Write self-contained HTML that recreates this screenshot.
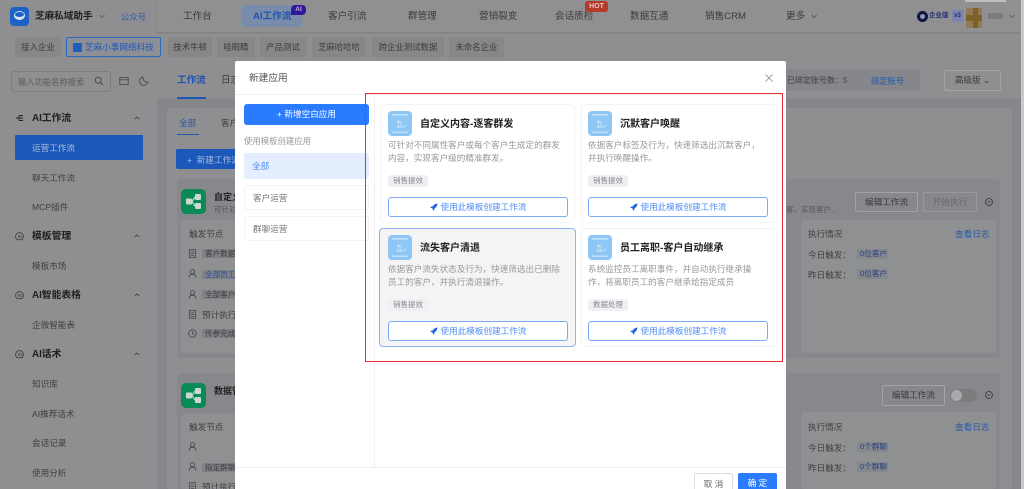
<!DOCTYPE html>
<html lang="zh-CN">
<head>
<meta charset="utf-8">
<title>新建应用</title>
<style>
*{box-sizing:border-box;margin:0;padding:0}
html,body{width:1024px;height:489px;overflow:hidden;background:#8f8f91}
body{font-family:"Liberation Sans","Noto Sans CJK SC",sans-serif;color:#3c3c3c}
#w{position:absolute;left:0;top:0;width:1024px;height:489px;overflow:hidden;filter:blur(.35px)}
.a{position:absolute}
.t{position:absolute;white-space:nowrap;line-height:14px;font-size:8.6px;margin-top:1px}
.n{font-size:9.6px;color:#3b3b3d}
.s{color:#3f3f41}
.h{font-size:9.8px;font-weight:700;color:#202022}
.tag{position:absolute;background:#878789;border-radius:2px;height:20px;top:37px;font-size:8.4px;line-height:20px;text-align:center;color:#3d3d3f;white-space:nowrap}
.mini{position:absolute;height:9px;background:#7f8184;border-radius:1px;font-size:7.6px;line-height:9px;color:#3c3c3e;padding:0 3px;white-space:nowrap;overflow:hidden}
.m2{height:10px;line-height:10px;color:#273f7f;background:#84878d;width:31px}
.btn{position:absolute;border:1px solid #a3a4a6;border-radius:2px;text-align:center;font-size:8.6px;line-height:18px;color:#3a3a3c;white-space:nowrap}
.card{position:absolute;width:196px;height:119px;background:#fff;border:1px solid #f3f4f6;border-radius:4px;--l:6px}
.card.on{background:#f4f4f5;border-color:#8cb3f2;left:379px;--l:8px}
.card .ic{position:absolute;left:var(--l);top:6px;width:24px;height:25px}
.card .ti{position:absolute;left:calc(var(--l) + 32px);top:13px;font-size:10px;line-height:14px;font-weight:700;color:#222;white-space:nowrap}
.card .de{position:absolute;left:var(--l);top:34px;width:180px;font-size:8.6px;line-height:13.2px;color:#999}
.card .tg{position:absolute;left:var(--l);top:70px;width:40px;height:12px;background:#eef0f4;border-radius:3px;font-size:7.5px;line-height:12px;text-align:center;color:#8a8a8e}
.card .bt{position:absolute;left:var(--l);top:92px;width:180px;height:20px;background:#fff;border:1px solid #7ea9f5;border-radius:3px;font-size:8.6px;line-height:18px;color:#4f8cf7;text-align:center;white-space:nowrap}
.card .bt svg{width:8px;height:8px;vertical-align:-1px;margin-right:3px}
.side{position:absolute;left:244px;width:125px;height:25px;border:1px solid #f3f3f3;border-radius:3px;font-size:8.6px;line-height:24px;padding-left:8px;color:#777}
</style>
</head>
<body>
<svg width="0" height="0" style="position:absolute">
<defs>
<symbol id="tpl" viewBox="0 0 24 25">
<rect width="24" height="25" rx="4" fill="#8ec7f6"/>
<rect x="4" y="3" width="16" height="1.6" fill="#c4e2fa"/>
<rect x="4" y="20.5" width="16" height="1.4" fill="#c4e2fa"/>
<path d="M10.500 16V9.500M10.500 9.500l-1.600 1.800M10.500 9.500l1.600 1.800M13 10v6M8 16h8l1.500-2" fill="none" stroke="#c9e5fb" stroke-width=".9"/>
</symbol>
<symbol id="rk" viewBox="0 0 16 16">
<path d="M15 1C10.500 1.200 7.500 3.500 5.300 7L2 7.500 0.500 10l3.300.3 2 2 .3 3.200 2.500-1.500.5-3.300C12.500 8.500 14.800 5.500 15 1z" fill="#1f66e5"/>
</symbol>
<symbol id="gr" viewBox="0 0 25 25">
<rect width="25" height="25" rx="5" fill="#0a8a57"/>
<rect x="5" y="9.500" width="6" height="6" rx="1" fill="#c9d8d0"/>
<rect x="14" y="5" width="6" height="6" rx="1" fill="#c9d8d0"/>
<rect x="14" y="14" width="6" height="6" rx="1" fill="#c9d8d0"/>
<path d="M11 12.500L14 8M11 12.500L14 17" stroke="#c9d8d0" stroke-width="1.200"/>
</symbol>
<symbol id="ai" viewBox="0 0 10 10">
<path d="M5 .7a4.300 4.300 0 0 1 4.300 4.300c0 1.500-.7 2.800-1.800 3.600H2.500A4.300 4.300 0 0 1 .7 5 4.300 4.300 0 0 1 5 .7z" fill="none" stroke="#333" stroke-width=".8"/>
<path d="M3.400 6.500L4.600 3.500 5.800 6.500M6.900 3.500v3" fill="none" stroke="#333" stroke-width=".6"/>
</symbol>
<symbol id="us" viewBox="0 0 10 10">
<circle cx="5" cy="3" r="2.300" fill="none" stroke="#3d3d3f" stroke-width=".9"/>
<path d="M1 9.500c.4-2.600 2-3.800 4-3.800s3.600 1.200 4 3.800" fill="none" stroke="#3d3d3f" stroke-width=".9"/>
</symbol>
<symbol id="dc" viewBox="0 0 10 10">
<rect x="1.500" y=".8" width="7" height="8.400" fill="none" stroke="#3d3d3f" stroke-width=".8"/>
<path d="M3 3.200h4M3 5.200h4M3 7.200h4" stroke="#3d3d3f" stroke-width=".7"/>
</symbol>
<symbol id="ck" viewBox="0 0 10 10">
<circle cx="5" cy="5" r="4.200" fill="none" stroke="#3d3d3f" stroke-width=".8"/>
<path d="M5 2.500V5.300L7 6.500" fill="none" stroke="#3d3d3f" stroke-width=".8"/>
</symbol>
<symbol id="mn" viewBox="0 0 8 8">
<circle cx="4" cy="4" r="3.500" fill="none" stroke="#333" stroke-width=".8"/>
<path d="M2.300 4h3.400" stroke="#333" stroke-width=".8"/>
</symbol>
</defs>
</svg>

<div id="w">
<!-- header -->
<div class="a" style="left:0;top:0;width:157px;height:32px;background:#8f8f91"></div>
<div class="a" style="left:157px;top:0;width:867px;height:32px;background:#909092;box-shadow:0 1px 2px rgba(0,0,0,.12)"></div>
<div class="a" style="left:10px;top:7px;width:19px;height:19px;border-radius:4px;background:#1c62c8"></div>
<div class="a" style="left:14px;top:11px;width:11px;height:9px;border-radius:50%;background:#dfe6f0"></div>
<div class="a" style="left:15px;top:12px;width:9px;height:5px;border-radius:50%;background:#1c62c8"></div>
<div class="t" style="left:35px;top:9px;font-size:9.600px;font-weight:700;color:#1f1f21">芝麻私域助手</div>
<svg class="a" style="left:99px;top:14px" width="6" height="5" viewBox="0 0 6 5"><path d="M.5 1L3 3.500 5.500 1" fill="none" stroke="#555" stroke-width=".7"/></svg>
<div class="t" style="left:121px;top:9px;font-size:8.400px;color:#2d5ba8">公众号</div>

<div class="t n" style="left:183px;top:9px">工作台</div>
<div class="a" style="left:242px;top:5px;width:60px;height:22px;background:#7a8cab;border-radius:2px"></div>
<div class="t n" style="left:253px;top:9px;color:#1f56b0;font-weight:700">AI工作流</div>
<div class="a" style="left:291px;top:5px;width:15px;height:10px;background:#32189a;border-radius:4px 4px 4px 0;color:#b9b3dc;font-size:6.500px;line-height:10px;text-align:center;font-weight:700">AI</div>
<div class="t n" style="left:328px;top:9px">客户引流</div>
<div class="t n" style="left:408px;top:9px">群管理</div>
<div class="t n" style="left:479px;top:9px">营销裂变</div>
<div class="t n" style="left:555px;top:9px">会话质检</div>
<div class="a" style="left:585px;top:1px;width:23px;height:11px;background:#b53a2c;border-radius:3px;color:#e5c6c0;font-size:7px;line-height:11px;text-align:center;font-weight:700">HOT</div>
<div class="t n" style="left:630px;top:9px">数据互通</div>
<div class="t n" style="left:705px;top:9px">销售CRM</div>
<div class="t n" style="left:786px;top:9px">更多</div>
<svg class="a" style="left:811px;top:14px" width="6" height="5" viewBox="0 0 6 5"><path d="M.5 1L3 3.500 5.500 1" fill="none" stroke="#444" stroke-width=".7"/></svg>
<div class="a" style="left:917px;top:11px;width:11px;height:11px;border-radius:50%;border:3px solid #14143c;background:#8f9bb5"></div>
<div class="t" style="left:929px;top:8px;font-size:6.500px;font-weight:700;color:#22307a">企业版</div>
<div class="a" style="left:952px;top:10px;width:11px;height:12px;background:#7e83ad;color:#1f2a70;font-size:6px;line-height:12px;text-align:center;font-weight:700">v3</div>
<div class="a" style="left:966px;top:8px;width:16px;height:20px;background:#8f7a55;border-radius:1px"></div>
<div class="a" style="left:973px;top:8px;width:5px;height:20px;background:#7d5f28"></div>
<div class="a" style="left:966px;top:15px;width:16px;height:6px;background:#7d5f28"></div>
<div class="a" style="left:988px;top:13px;width:15px;height:6px;background:#7b7b7d"></div>
<svg class="a" style="left:1009px;top:14px" width="6" height="5" viewBox="0 0 6 5"><path d="M.5 1L3 3.500 5.500 1" fill="none" stroke="#555" stroke-width=".7"/></svg>
<div class="a" style="left:965px;top:0;width:41px;height:2px;background:#bdbdbd"></div>

<!-- company tags -->
<div class="tag" style="left:15px;width:46px">接入企业</div>
<div class="a" style="left:66px;top:37px;width:95px;height:20px;border:1px solid #2f68bf;border-radius:2px;background:#8c8f96"></div>
<div class="a" style="left:73px;top:43px;width:9px;height:9px;background:#1f5ec0;border-radius:1px"></div>
<div class="t" style="left:85px;top:39px;color:#2159b8;font-size:8.600px">芝麻小事网络科技</div>
<div class="tag" style="left:168px;width:44px">技术牛顿</div>
<div class="tag" style="left:217px;width:38px">哇眼睛</div>
<div class="tag" style="left:260px;width:46px">产品测试</div>
<div class="tag" style="left:312px;width:54px">芝麻哈哈哈</div>
<div class="tag" style="left:372px;width:72px">跨企业测试数据</div>
<div class="tag" style="left:449px;width:55px">未命名企业</div>

<!-- search -->
<div class="a" style="left:11px;top:71px;width:100px;height:21px;border:1px solid #7d7e80;border-radius:3px"></div>
<div class="t" style="left:18px;top:74px;color:#5d5d5f;font-size:8.300px">输入功能名称搜索</div>
<svg class="a" style="left:94px;top:76px" width="10" height="10" viewBox="0 0 10 10"><circle cx="4.200" cy="4.200" r="3" fill="none" stroke="#444" stroke-width=".9"/><path d="M6.500 6.500L9 9" stroke="#444" stroke-width=".9"/></svg>
<svg class="a" style="left:119px;top:76px" width="10" height="10" viewBox="0 0 10 10"><rect x=".8" y="1.500" width="8.400" height="7" fill="none" stroke="#444" stroke-width=".8"/><path d="M.8 3.800h8.400" stroke="#444" stroke-width=".8"/></svg>
<svg class="a" style="left:139px;top:76px" width="10" height="10" viewBox="0 0 10 10"><path d="M4 .8a4.300 4.300 0 1 0 5 5.400A4.500 4.500 0 0 1 4 .8z" fill="none" stroke="#444" stroke-width=".8"/></svg>

<!-- sidebar -->
<svg class="a" style="left:16px;top:114px" width="8" height="8" viewBox="0 0 8 8"><path d="M0 4h3M3 1.500h4M3 4h4M3 6.500h4M3 1.500v5" stroke="#222" stroke-width=".9" fill="none"/></svg>
<div class="t h" style="left:32px;top:111px">AI工作流</div>
<div class="a" style="left:15px;top:135px;width:128px;height:25px;background:#1b58ba;border-radius:1px"></div>
<div class="t" style="left:32px;top:140px;color:#a9bcdc">运营工作流</div>
<div class="t s" style="left:32px;top:170px">聊天工作流</div>
<div class="t s" style="left:32px;top:199px">MCP插件</div>
<svg class="a" style="left:15px;top:232px" width="9" height="9"><use href="#ai"/></svg>
<div class="t h" style="left:32px;top:229px">模板管理</div>
<div class="t s" style="left:32px;top:258px">模板市场</div>
<svg class="a" style="left:15px;top:291px" width="9" height="9"><use href="#ai"/></svg>
<div class="t h" style="left:32px;top:288px">AI智能表格</div>
<div class="t s" style="left:32px;top:317px">企微智能表</div>
<svg class="a" style="left:15px;top:350px" width="9" height="9"><use href="#ai"/></svg>
<div class="t h" style="left:32px;top:347px">AI话术</div>
<div class="t s" style="left:32px;top:376px">知识库</div>
<div class="t s" style="left:32px;top:406px">AI推荐话术</div>
<div class="t s" style="left:32px;top:435px">会话记录</div>
<div class="t s" style="left:32px;top:465px">使用分析</div>
<svg class="a" style="left:134px;top:116px" width="6" height="4" viewBox="0 0 6 4"><path d="M.8 3L3 1l2.200 2" fill="none" stroke="#333" stroke-width=".8"/></svg>
<svg class="a" style="left:134px;top:234px" width="6" height="4" viewBox="0 0 6 4"><path d="M.8 3L3 1l2.200 2" fill="none" stroke="#333" stroke-width=".8"/></svg>
<svg class="a" style="left:134px;top:293px" width="6" height="4" viewBox="0 0 6 4"><path d="M.8 3L3 1l2.200 2" fill="none" stroke="#333" stroke-width=".8"/></svg>
<svg class="a" style="left:134px;top:352px" width="6" height="4" viewBox="0 0 6 4"><path d="M.8 3L3 1l2.200 2" fill="none" stroke="#333" stroke-width=".8"/></svg>

<!-- content area -->
<div class="a" style="left:157px;top:98px;width:867px;height:391px;background:#85878a"></div>
<div class="a" style="left:167px;top:108px;width:845px;height:381px;background:#8f8f91;border-radius:3px"></div>
<div class="a" style="left:1021px;top:0;width:3px;height:489px;background:#c9c9c9"></div>
<div class="t" style="left:177px;top:73px;font-size:9.600px;font-weight:700;color:#1f56b0">工作流</div>
<div class="a" style="left:177px;top:97px;width:29px;height:1.500px;background:#1f56b0"></div>
<div class="t n" style="left:221px;top:73px">日志</div>
<div class="t" style="left:179px;top:115px;color:#1f56b0">全部</div>
<div class="a" style="left:177px;top:134px;width:22px;height:1px;background:#1f56b0"></div>
<div class="t s" style="left:221px;top:115px">客户</div>
<div class="a" style="left:176px;top:149px;width:70px;height:20px;background:#1b58ba;border-radius:2px"></div>
<div class="t" style="left:187px;top:152px;color:#a9bcdc">+&nbsp;&nbsp;新建工作流</div>
<!-- top bar right -->
<div class="a" style="left:780px;top:69px;width:140px;height:22px;background:#85878a;border-radius:3px"></div>
<div class="t s" style="left:787px;top:73px;font-size:8px">已绑定账号数：5</div>
<div class="t" style="left:871px;top:73px;color:#2558ad;font-size:8.300px">绑定账号</div>
<div class="btn" style="left:944px;top:70px;width:57px;height:21px;line-height:19px">高级版 ⌄</div>

<!-- workflow cards -->
<div class="a" style="left:177px;top:179px;width:823px;height:179px;background:#86888b;border-radius:4px"></div>
<div class="a" style="left:177px;top:373px;width:823px;height:116px;background:#86888b;border-radius:4px 4px 0 0"></div>
<svg class="a" style="left:181px;top:189px" width="25" height="25"><use href="#gr"/></svg>
<svg class="a" style="left:181px;top:383px" width="25" height="25"><use href="#gr"/></svg>
<div class="t" style="left:214px;top:189px;font-size:9px;font-weight:700;color:#202022">自定义内容</div>
<div class="t" style="left:214px;top:202px;font-size:7.500px;color:#55565a">可针对不同</div>
<div class="t" style="left:214px;top:383px;font-size:9px;font-weight:700;color:#202022">数据管理</div>
<div class="a" style="left:181px;top:220px;width:200px;height:133px;background:#8f9092;border-radius:4px"></div>
<div class="a" style="left:181px;top:414px;width:200px;height:75px;background:#8f9092;border-radius:4px"></div>
<div class="t s" style="left:189px;top:226px">触发节点</div>
<svg class="a" style="left:188px;top:249px" width="9" height="9"><use href="#dc"/></svg>
<div class="mini" style="left:202px;top:249px;width:40px">客户数据</div>
<svg class="a" style="left:188px;top:269px" width="9" height="9"><use href="#us"/></svg>
<div class="mini" style="left:202px;top:270px;width:40px;color:#2b4f9a">全部员工</div>
<svg class="a" style="left:188px;top:290px" width="9" height="9"><use href="#us"/></svg>
<div class="mini" style="left:202px;top:290px;width:40px">全部客户</div>
<svg class="a" style="left:188px;top:310px" width="9" height="9"><use href="#dc"/></svg>
<div class="t s" style="left:202px;top:307px">预计执行</div>
<svg class="a" style="left:188px;top:329px" width="9" height="9"><use href="#ck"/></svg>
<div class="mini" style="left:202px;top:329px;width:40px">传参完成</div>
<div class="t s" style="left:189px;top:419px">触发节点</div>
<svg class="a" style="left:188px;top:442px" width="9" height="9"><use href="#us"/></svg>
<svg class="a" style="left:188px;top:462px" width="9" height="9"><use href="#us"/></svg>
<div class="mini" style="left:202px;top:463px;width:40px">指定群聊</div>
<svg class="a" style="left:188px;top:482px" width="9" height="9"><use href="#dc"/></svg>
<div class="t s" style="left:202px;top:479px">预计执行</div>

<!-- right of workflows -->
<div class="a" style="left:801px;top:220px;width:195px;height:133px;background:#8f9092;border-radius:4px"></div>
<div class="a" style="left:801px;top:412px;width:195px;height:77px;background:#8f9092;border-radius:4px"></div>
<div class="t" style="left:786px;top:202px;font-size:7.500px;color:#55565a">客，实现客户...</div>
<div class="btn" style="left:855px;top:192px;width:63px;height:20px">编辑工作流</div>
<div class="btn" style="left:923px;top:192px;width:54px;height:20px;color:#6a6a6c;border-color:#999">开始执行</div>
<svg class="a" style="left:985px;top:198px" width="8" height="8"><use href="#mn"/></svg>
<div class="t s" style="left:808px;top:226px">执行情况</div>
<div class="t" style="left:955px;top:226px;color:#2558ad">查看日志</div>
<div class="t s" style="left:808px;top:247px">今日触发：</div>
<div class="mini m2" style="left:857px;top:249px">0位客户</div>
<div class="t s" style="left:808px;top:267px">昨日触发：</div>
<div class="mini m2" style="left:857px;top:269px">0位客户</div>
<div class="btn" style="left:882px;top:385px;width:63px;height:21px;line-height:19px">编辑工作流</div>
<div class="a" style="left:950px;top:389px;width:27px;height:13px;background:#7b7c7e;border-radius:7px"></div>
<div class="a" style="left:951px;top:390px;width:11px;height:11px;background:#a9a9ab;border-radius:50%"></div>
<svg class="a" style="left:985px;top:391px" width="8" height="8"><use href="#mn"/></svg>
<div class="t s" style="left:808px;top:419px">执行情况</div>
<div class="t" style="left:955px;top:419px;color:#2558ad">查看日志</div>
<div class="t s" style="left:808px;top:440px">今日触发：</div>
<div class="mini m2" style="left:857px;top:442px">0个群聊</div>
<div class="t s" style="left:808px;top:460px">昨日触发：</div>
<div class="mini m2" style="left:857px;top:462px">0个群聊</div>

<!-- modal -->
<div class="a" style="left:235px;top:61px;width:551px;height:428px;background:#fff;border-radius:2px 2px 0 0"></div>
<div class="t" style="left:249px;top:71px;font-size:9.700px;color:#555">新建应用</div>
<svg class="a" style="left:765px;top:74px" width="8" height="8" viewBox="0 0 8 8"><path d="M.5.500l7 7M7.500.500l-7 7" stroke="#8a8a8a" stroke-width=".8"/></svg>
<div class="a" style="left:235px;top:94px;width:551px;height:1px;background:#f0f0f0"></div>
<div class="a" style="left:374px;top:95px;width:1px;height:372px;background:#f0f0f0"></div>
<div class="a" style="left:235px;top:467px;width:551px;height:1px;background:#eeeeee"></div>

<div class="a" style="left:244px;top:104px;width:125px;height:21px;background:#2b7bff;border-radius:3px;color:#fff;font-size:8.600px;line-height:21px;text-align:center">+ 新增空白应用</div>
<div class="t" style="left:244px;top:133px;font-size:8.400px;color:#999">使用模板创建应用</div>
<div class="a" style="left:244px;top:153px;width:125px;height:26px;background:#e5eeff;border-radius:3px;color:#4f8cf7;font-size:8.600px;line-height:26px;padding-left:8px">全部</div>
<div class="side" style="top:185px">客户运营</div>
<div class="side" style="top:216px">群聊运营</div>

<div class="card" style="left:380px;top:104px;width:195px;--l:7px">
<svg class="ic"><use href="#tpl"/></svg>
<div class="ti">自定义内容-逐客群发</div>
<div class="de">可针对不同属性客户或每个客户生成定的群发内容，实现客户级的精准群发。</div>
<div class="tg">销售提效</div>
<div class="bt"><svg><use href="#rk"/></svg>使用此模板创建工作流</div>
</div>
<div class="card" style="left:581px;top:104px">
<svg class="ic"><use href="#tpl"/></svg>
<div class="ti">沉默客户唤醒</div>
<div class="de">依据客户标签及行为，快速筛选出沉默客户，并执行唤醒操作。</div>
<div class="tg">销售提效</div>
<div class="bt"><svg><use href="#rk"/></svg>使用此模板创建工作流</div>
</div>
<div class="card on" style="top:228px;width:197px">
<svg class="ic"><use href="#tpl"/></svg>
<div class="ti">流失客户清退</div>
<div class="de">依据客户流失状态及行为，快速筛选出已删除员工的客户，并执行清退操作。</div>
<div class="tg">销售提效</div>
<div class="bt"><svg><use href="#rk"/></svg>使用此模板创建工作流</div>
</div>
<div class="card" style="left:581px;top:228px">
<svg class="ic"><use href="#tpl"/></svg>
<div class="ti">员工离职-客户自动继承</div>
<div class="de" style="width:170px">系统监控员工离职事件，并自动执行继承操作，将离职员工的客户继承给指定成员</div>
<div class="tg">数据处理</div>
<div class="bt"><svg><use href="#rk"/></svg>使用此模板创建工作流</div>
</div>

<div class="a" style="left:364.500px;top:93px;width:418.500px;height:269px;border:1.600px solid #e8303a"></div>

<div class="a" style="left:694px;top:473px;width:39px;height:20px;background:#fff;border:1px solid #dedede;border-radius:2px;color:#666;font-size:8.600px;line-height:20px;text-align:center">取 消</div>
<div class="a" style="left:738px;top:473px;width:39px;height:20px;background:#2b7bff;border-radius:2px;color:#fff;font-size:8.600px;line-height:21px;text-align:center">确 定</div>
</div>
</body>
</html>
